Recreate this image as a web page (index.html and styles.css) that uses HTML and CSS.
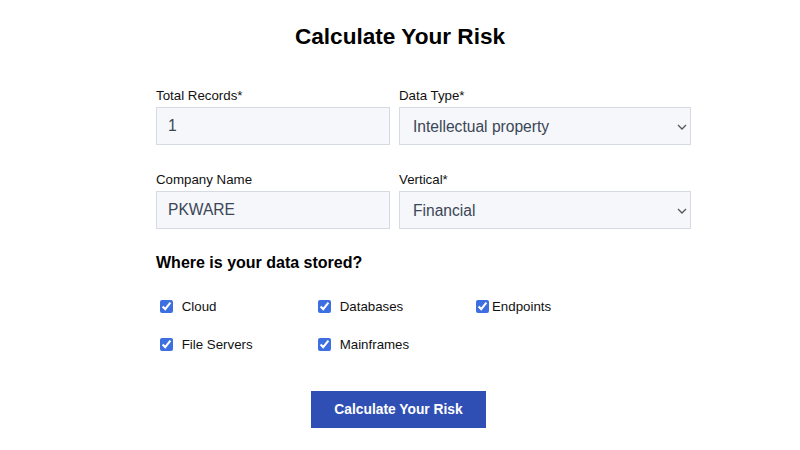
FILE: index.html
```html
<!DOCTYPE html>
<html lang="en">
<head>
    <meta charset="UTF-8">
    <meta name="viewport" content="width=device-width, initial-scale=1.0">
    <title>Calculate Your Risk</title>
    <link rel="stylesheet" href="styles.css">
</head>
<body>
    <section class="calc">
        <h1>Calculate Your Risk</h1>
        <form class="calc-form">
            <div class="fields">
                <div class="field">
                    <label for="records">Total Records*</label>
                    <input type="text" id="records" value="1">
                </div>
                <div class="field">
                    <label for="dataType">Data Type*</label>
                    <div class="select-wrap">
                        <select id="dataType">
                            <option>Intellectual property</option>
                        </select>
                        <svg class="chevron" width="10" height="6" viewBox="0 0 10 6"><path d="M1 1l4 4 4-4" fill="none" stroke="#555" stroke-width="1.3"/></svg>
                    </div>
                </div>
                <div class="field">
                    <label for="company">Company Name</label>
                    <input type="text" id="company" value="PKWARE">
                </div>
                <div class="field">
                    <label for="vertical">Vertical*</label>
                    <div class="select-wrap">
                        <select id="vertical">
                            <option>Financial</option>
                        </select>
                        <svg class="chevron" width="10" height="6" viewBox="0 0 10 6"><path d="M1 1l4 4 4-4" fill="none" stroke="#555" stroke-width="1.3"/></svg>
                    </div>
                </div>
            </div>

            <h2>Where is your data stored?</h2>
            <div class="storage">
                <label class="check"><input type="checkbox" checked> Cloud</label>
                <label class="check"><input type="checkbox" checked> Databases</label>
                <label class="check tight"><input type="checkbox" checked>Endpoints</label>
                <label class="check"><input type="checkbox" checked> File Servers</label>
                <label class="check"><input type="checkbox" checked> Mainframes</label>
            </div>

            <div class="actions">
                <button type="submit">Calculate Your Risk</button>
            </div>
        </form>
    </section>
</body>
</html>
```

FILE: styles.css
```css
/* General Styles */
body {
    font-family: 'Liberation Sans', Arial, sans-serif;
    margin: 0;
    padding: 0;
    background-color: #fff;
    color: #111;
}

.calc h1 {
    margin: 23px 0 0;
    font-size: 22.6px;
    line-height: 28px;
    text-align: center;
    color: #000;
}

.calc-form {
    width: 535px;
    margin: 36px 0 0 156px;
}

.fields {
    display: grid;
    grid-template-columns: 234px 292px;
    column-gap: 9px;
    row-gap: 26px;
}

.field label {
    display: block;
    font-size: 13.3px;
    line-height: 17px;
    margin-bottom: 3px;
    color: #111;
}

.field input,
.field select {
    box-sizing: border-box;
    width: 100%;
    height: 38px;
    padding: 0 11px;
    border: 1px solid #d6dbe2;
    border-radius: 0;
    background-color: #f5f7fa;
    color: #3b4656;
    font-family: inherit;
    font-size: 15.6px;
    outline: none;
    appearance: none;
    -webkit-appearance: none;
}

.field select {
    padding-left: 13px;
}

.select-wrap {
    position: relative;
}

.chevron {
    position: absolute;
    right: 4px;
    top: 17px;
    pointer-events: none;
}

.calc-form h2 {
    margin: 24px 0 0;
    font-size: 16px;
    line-height: 20px;
    color: #000;
}

.storage {
    display: grid;
    grid-template-columns: 158px 158px 158px;
    row-gap: 20px;
    margin: 24px 0 0 4px;
}

.check {
    display: flex;
    align-items: center;
    height: 18px;
    font-size: 13.3px;
    color: #111;
    white-space: pre;
}

.check input {
    width: 13px;
    height: 13px;
    margin: 0 5px 0 0;
    accent-color: #3d6fe0;
}

.check.tight input {
    margin-right: 3px;
}

.actions {
    display: flex;
    justify-content: center;
    width: 797px;
    margin: 38px 0 0 -156px;
}

.actions button {
    width: 175px;
    height: 37px;
    border: none;
    background-color: #2f4fb5;
    color: #fff;
    font-family: inherit;
    font-size: 13.8px;
    font-weight: bold;
    cursor: pointer;
}
```
